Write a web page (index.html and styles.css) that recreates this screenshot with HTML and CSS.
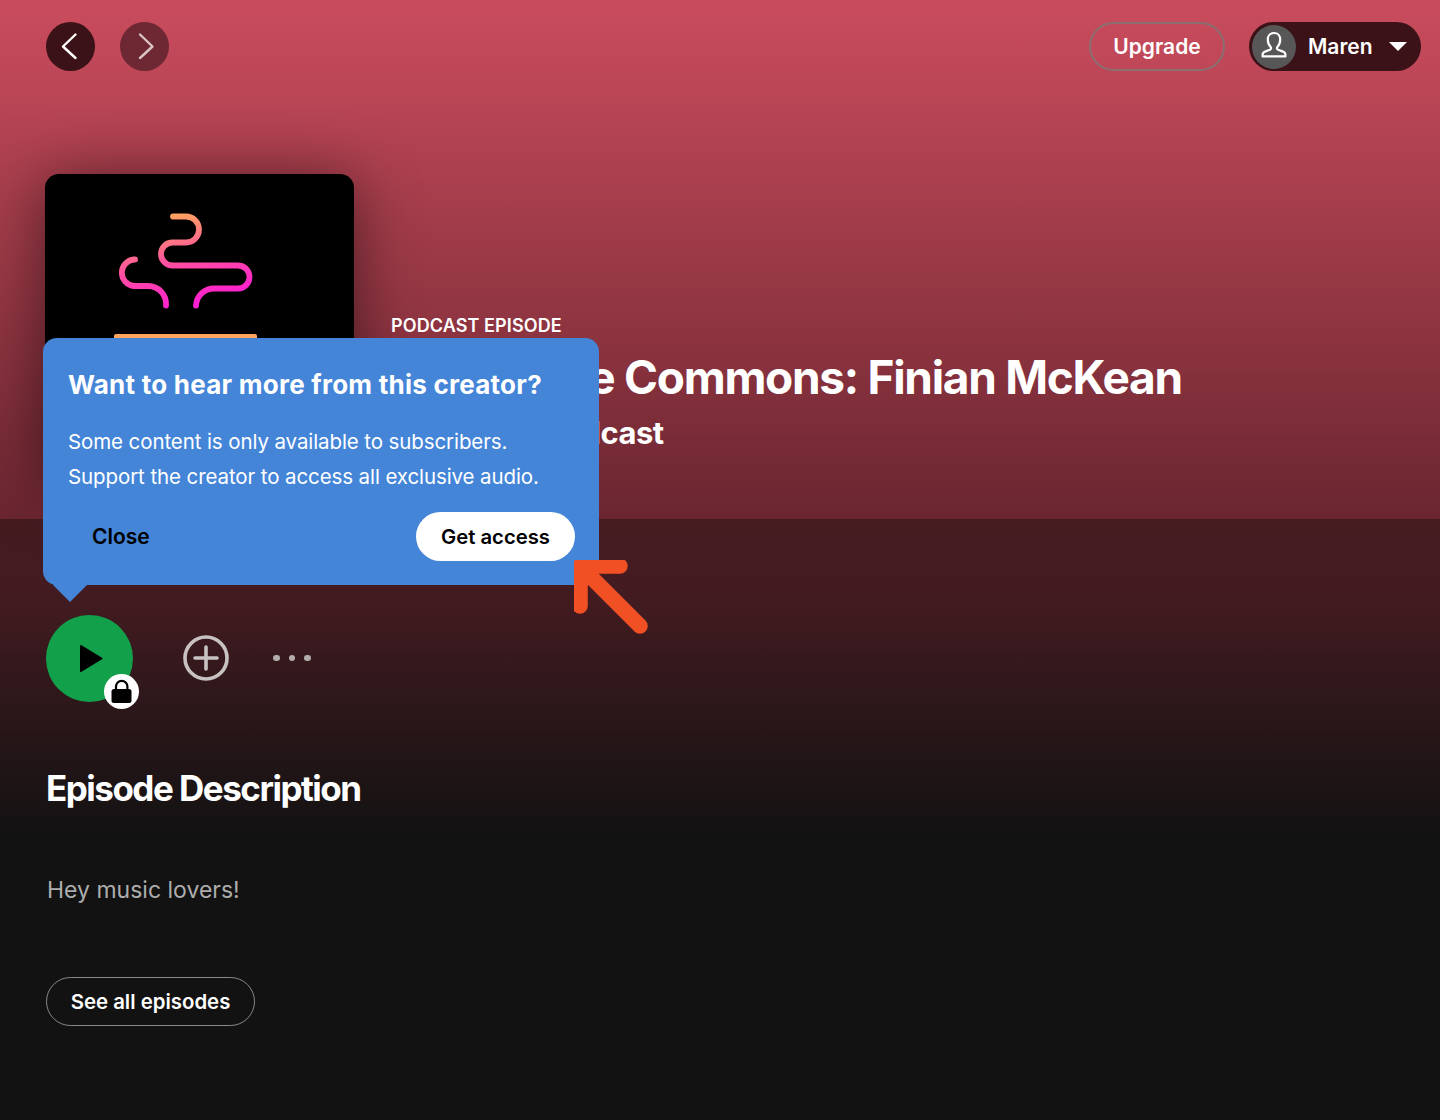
FILE: index.html
```html
<!DOCTYPE html>
<html lang="en">
<head>
    <meta charset="UTF-8">
    <meta name="viewport" content="width=device-width, initial-scale=1.0">
    <title>Podcast Episode</title>
    <link rel="stylesheet" href="styles.css">
</head>
<body>
    <div class="page">
        <header class="hero">
            <div class="topbar">
                <div class="nav-buttons">
                    <button class="nav-btn">
                        <svg width="49" height="49" viewBox="0 0 49 49"><path d="M29.5 12.5 L17 24.5 L29.5 36" fill="none" stroke="#fff" stroke-width="2.4" stroke-linecap="round" stroke-linejoin="round"/></svg>
                    </button>
                    <button class="nav-btn nav-btn-off">
                        <svg width="49" height="49" viewBox="0 0 49 49"><path d="M20 12.5 L32.5 24.5 L20 36" fill="none" stroke="#d9c4c6" stroke-width="2.4" stroke-linecap="round" stroke-linejoin="round"/></svg>
                    </button>
                </div>
                <div class="account">
                    <button class="upgrade">Upgrade</button>
                    <div class="user-pill">
                        <span class="avatar">
                            <svg width="44" height="44" viewBox="0 0 44 44"><path d="M22 8 C18 8 15.8 11 15.8 14.5 C15.8 18 17 20.3 18.6 22 C19.5 23 19.2 24.2 17.8 24.8 L13 26.6 C11.3 27.3 10.6 28.4 10.6 29.8 L10.6 31.4 L33.4 31.4 L33.4 29.8 C33.4 28.4 32.7 27.3 31 26.6 L26.2 24.8 C24.8 24.2 24.5 23 25.4 22 C27 20.3 28.2 18 28.2 14.5 C28.2 11 26 8 22 8 Z" fill="none" stroke="#fff" stroke-width="2.2" stroke-linejoin="round"/></svg>
                        </span>
                        <span class="user-name">Maren</span>
                        <span class="caret"></span>
                    </div>
                </div>
            </div>
            <div class="episode">
                <div class="cover">
                    <svg width="309" height="309" viewBox="45 174 309 309">
                        <defs>
                            <linearGradient id="steam" gradientUnits="userSpaceOnUse" x1="170" y1="216" x2="190" y2="305">
                                <stop offset="0" stop-color="#ffa35f"/>
                                <stop offset="0.5" stop-color="#ff4fa0"/>
                                <stop offset="1" stop-color="#ff1fd0"/>
                            </linearGradient>
                        </defs>
                        <path d="M173 216.5 H186 A13 13 0 0 1 186 242.5 H172.5 A11.5 11.5 0 0 0 172.5 265.5 H238 A11.5 11.5 0 0 1 238 288.5 H214 A18 18 0 0 0 196 305.5" fill="none" stroke="url(#steam)" stroke-width="5.8" stroke-linecap="round"/>
                        <path d="M135 259.5 H134 A13.3 13.3 0 0 0 134 286 H148 A18 18 0 0 1 166 305.5" fill="none" stroke="url(#steam)" stroke-width="5.8" stroke-linecap="round"/>
                        <rect x="114" y="334" width="143" height="10" rx="2" fill="#ffa35f"/>
                    </svg>
                </div>
                <div class="episode-info">
                    <div class="episode-type">PODCAST EPISODE</div>
                    <h1 class="episode-title">Behind the Commons: Finian McKean</h1>
                    <div class="episode-show">Commons Podcast</div>
                </div>
            </div>
        </header>

        <main class="content">
            <div class="actions">
                <button class="play">
                    <svg width="87" height="87" viewBox="0 0 87 87"><path d="M35 31 L55.5 43.5 L35 56 Z" stroke="#000" stroke-width="2" stroke-linejoin="round"/></svg>
                    <span class="lock">
                        <svg width="35" height="35" viewBox="0 0 35 35"><path d="M12 16 V12.5 A5.7 5.7 0 0 1 23.4 12.5 V16" fill="none" stroke="#000" stroke-width="2.2"/><rect x="7.5" y="15" width="20" height="14" rx="2.5"/></svg>
                    </span>
                </button>
                <svg class="add" width="46" height="46" viewBox="0 0 46 46"><circle cx="23" cy="23" r="21" fill="none" stroke="#c8c2c2" stroke-width="3.6"/><path d="M23 12 V34 M12 23 H34" stroke="#c8c2c2" stroke-width="3.6" stroke-linecap="round"/></svg>
                <div class="more"><i></i><i></i><i></i></div>
            </div>
            <h2 class="section-title">Episode Description</h2>
            <p class="description">Hey music lovers!</p>
            <button class="see-all">See all episodes</button>
        </main>

        <div class="popover">
            <h3>Want to hear more from this creator?</h3>
            <p>Some content is only available to subscribers.<br>Support the creator to access all exclusive audio.</p>
            <div class="popover-actions">
                <button class="close-btn">Close</button>
                <button class="access-btn">Get access</button>
            </div>
        </div>

        <svg class="pointer" width="76" height="76" viewBox="0 0 76 76"><path d="M6 46 V6 H46 M6 6 L66 66" fill="none" stroke="#f15025" stroke-width="15.5" stroke-linecap="round" stroke-linejoin="round"/></svg>
    </div>
</body>
</html>
```

FILE: styles.css
```css
* {
    box-sizing: border-box;
}
body {
    margin: 0;
    background: #121212;
    color: #fff;
    font-family: Inter, "Liberation Sans", sans-serif;
}
button {
    font-family: inherit;
    cursor: pointer;
}
.page {
    position: relative;
    width: 1440px;
    height: 1120px;
    overflow: hidden;
}
.hero {
    height: 519px;
    padding: 22px 19px 0 46px;
    background: linear-gradient(to bottom, #c94c5d 0, #c04858 60px, #6a2630 100%);
}
.topbar {
    display: flex;
    justify-content: space-between;
    align-items: center;
}
.nav-buttons {
    display: flex;
    gap: 25px;
}
.nav-btn {
    width: 49px;
    height: 49px;
    padding: 0;
    border: none;
    border-radius: 50%;
    background: #3b1217;
}
.nav-btn-off {
    background: #6e2833;
}
.account {
    display: flex;
    align-items: center;
    gap: 24px;
}
.upgrade {
    width: 136px;
    height: 49px;
    border: 2px solid #8b6f70;
    border-radius: 25px;
    background: transparent;
    color: #fff;
    font-size: 21px;
    font-weight: 600;
}
.user-pill {
    display: flex;
    align-items: center;
    width: 172px;
    height: 49px;
    padding: 0 14px 0 3px;
    border-radius: 25px;
    background: #3b1217;
}
.avatar {
    display: block;
    width: 44px;
    height: 44px;
    border-radius: 50%;
    background: #575757;
}
.user-name {
    margin-left: 12px;
    font-size: 21px;
    font-weight: 600;
}
.caret {
    margin-left: auto;
    border-left: 9px solid transparent;
    border-right: 9px solid transparent;
    border-top: 9px solid #fff;
}
.episode {
    display: flex;
    gap: 37px;
    margin-top: 103px;
    margin-left: -1px;
}
.cover {
    flex: none;
    width: 309px;
    height: 309px;
    border-radius: 14px;
    background: #000;
    box-shadow: 0 4px 60px rgba(0, 0, 0, 0.5);
    overflow: hidden;
}
.episode-info {
    padding-top: 140px;
}
.episode-type {
    font-size: 18px;
    font-weight: 600;
    line-height: 24px;
    letter-spacing: 0.1px;
}
.episode-title {
    margin: 10px 0 0 -4px;
    font-size: 46px;
    font-weight: 700;
    line-height: 58px;
    letter-spacing: -1.3px;
    white-space: nowrap;
}
.episode-show {
    margin: 7px 0 0 -5px;
    font-size: 31px;
    font-weight: 700;
    line-height: 40px;
    letter-spacing: -0.5px;
}
.content {
    height: 601px;
    padding: 96px 46px 0;
    background: linear-gradient(to bottom, #451b20 0, #421b20 80px, #121212 320px);
}
.actions {
    display: flex;
    align-items: center;
    height: 87px;
}
.play {
    position: relative;
    width: 87px;
    height: 87px;
    padding: 0;
    border: none;
    border-radius: 50%;
    background: #13a04a;
}
.play svg {
    display: block;
}
.lock {
    position: absolute;
    left: 58px;
    top: 59px;
    width: 35px;
    height: 35px;
    border-radius: 50%;
    background: #fff;
}
.add {
    margin: 0 0 1px 50px;
}
.more {
    display: flex;
    gap: 9px;
    margin: 0 0 1px 44px;
}
.more i {
    width: 6.5px;
    height: 6.5px;
    border-radius: 50%;
    background: #b3adad;
}
.section-title {
    margin: 62px 0 0;
    font-size: 35px;
    font-weight: 700;
    line-height: 48px;
    letter-spacing: -1.5px;
}
.description {
    margin: 60px 0 0 1px;
    font-size: 23px;
    line-height: 36px;
    color: #adadad;
}
.see-all {
    display: block;
    width: 209px;
    height: 49px;
    margin-top: 69px;
    border: 1.5px solid #8a8a8a;
    border-radius: 25px;
    background: transparent;
    color: #fff;
    font-size: 20.4px;
    font-weight: 600;
}
.popover {
    position: absolute;
    left: 43px;
    top: 338px;
    width: 556px;
    height: 247px;
    padding: 27px 24px 0 25px;
    border-radius: 14px 14px 0 14px;
    background: #4485d8;
}
.popover::after {
    content: "";
    position: absolute;
    left: 15px;
    bottom: -12px;
    width: 24px;
    height: 24px;
    background: #4485d8;
    transform: rotate(45deg);
}
.popover h3 {
    margin: 0;
    font-size: 26px;
    font-weight: 700;
    line-height: 40px;
    letter-spacing: 0.25px;
}
.popover p {
    margin: 19px 0 0;
    font-size: 20.5px;
    line-height: 35px;
    letter-spacing: -0.1px;
}
.popover-actions {
    display: flex;
    justify-content: space-between;
    align-items: center;
    margin-top: 18px;
}
.close-btn {
    padding: 0 25px 0 24px;
    border: none;
    background: none;
    color: #000;
    font-size: 21px;
    font-weight: 600;
}
.access-btn {
    width: 159px;
    height: 49px;
    border: none;
    border-radius: 25px;
    background: #fff;
    color: #000;
    font-size: 20.3px;
    font-weight: 600;
}
.pointer {
    position: absolute;
    left: 574px;
    top: 560px;
}
```
